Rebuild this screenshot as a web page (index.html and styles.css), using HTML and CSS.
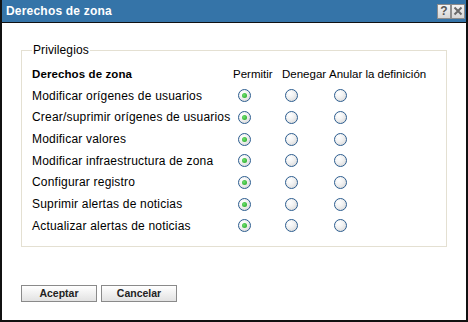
FILE: index.html
```html
<!DOCTYPE html>
<html lang="es">
<head>
<meta charset="utf-8">
<title>Derechos de zona</title>
<link rel="stylesheet" href="styles.css">
</head>
<body>
<div class="window">
  <div class="titlebar">
    <span class="title">Derechos de zona</span>
    <span class="tb-buttons">
      <span class="tb-btn help">?</span>
      <span class="tb-btn close">
        <svg width="10" height="10" viewBox="0 0 10 10"><path d="M1.5 1.5 L8.5 8.5 M8.5 1.5 L1.5 8.5" stroke="#6a6a6a" stroke-width="2" fill="none"/></svg>
      </span>
    </span>
  </div>
  <div class="content">
    <fieldset class="group">
      <legend>Privilegios</legend>
      <div class="grid">
        <div class="hdr label">Derechos de zona</div>
        <div class="hdr col">Permitir</div>
        <div class="hdr col">Denegar</div>
        <div class="hdr col">Anular la definición</div>

        <div class="label">Modificar orígenes de usuarios</div>
        <div class="cell c1"><span class="radio on"></span></div>
        <div class="cell c2"><span class="radio"></span></div>
        <div class="cell c3"><span class="radio"></span></div>

        <div class="label">Crear/suprimir orígenes de usuarios</div>
        <div class="cell c1"><span class="radio on"></span></div>
        <div class="cell c2"><span class="radio"></span></div>
        <div class="cell c3"><span class="radio"></span></div>

        <div class="label">Modificar valores</div>
        <div class="cell c1"><span class="radio on"></span></div>
        <div class="cell c2"><span class="radio"></span></div>
        <div class="cell c3"><span class="radio"></span></div>

        <div class="label">Modificar infraestructura de zona</div>
        <div class="cell c1"><span class="radio on"></span></div>
        <div class="cell c2"><span class="radio"></span></div>
        <div class="cell c3"><span class="radio"></span></div>

        <div class="label">Configurar registro</div>
        <div class="cell c1"><span class="radio on"></span></div>
        <div class="cell c2"><span class="radio"></span></div>
        <div class="cell c3"><span class="radio"></span></div>

        <div class="label">Suprimir alertas de noticias</div>
        <div class="cell c1"><span class="radio on"></span></div>
        <div class="cell c2"><span class="radio"></span></div>
        <div class="cell c3"><span class="radio"></span></div>

        <div class="label">Actualizar alertas de noticias</div>
        <div class="cell c1"><span class="radio on"></span></div>
        <div class="cell c2"><span class="radio"></span></div>
        <div class="cell c3"><span class="radio"></span></div>
      </div>
    </fieldset>
    <div class="actions">
      <button class="btn">Aceptar</button>
      <button class="btn">Cancelar</button>
    </div>
  </div>
</div>
</body>
</html>
```

FILE: styles.css
```css
html, body {
  margin: 0;
  padding: 0;
  background: #ffffff;
}

.window {
  box-sizing: border-box;
  width: 468px;
  height: 322px;
  border: 2px solid #111111;
  border-top: none;
  background: #ffffff;
  font-family: "Liberation Sans", Arial, sans-serif;
  font-size: 12px;
  color: #000000;
  display: flex;
  flex-direction: column;
}

.titlebar {
  height: 22px;
  flex: none;
  background: #3574a8;
  border-bottom: 1px solid #111111;
  display: flex;
  align-items: center;
  justify-content: space-between;
  padding: 0 1px 0 4px;
}

.title {
  color: #ffffff;
  font-weight: bold;
  font-size: 12px;
  letter-spacing: 0.2px;
}

.tb-buttons {
  display: flex;
  gap: 0;
}

.tb-btn {
  box-sizing: border-box;
  width: 14px;
  height: 15px;
  border: 1px solid #8c8c8c;
  background: linear-gradient(#f4f4f4, #d6d6d6);
  display: flex;
  align-items: center;
  justify-content: center;
  color: #555555;
  font-weight: bold;
  font-size: 12px;
  line-height: 1;
}

.content {
  padding: 20px 19px 0 19px;
}

.group {
  margin: 0;
  padding: 6px 10px 9px 10px;
  border: 1px solid #e4e0d2;
  min-width: 0;
}

.group legend {
  padding: 0 1px;
  margin-left: 0;
  line-height: 14px;
  font-size: 12px;
  letter-spacing: 0.1px;
}

.grid {
  display: grid;
  grid-template-columns: 201px 49px 47px auto;
  grid-template-rows: 22px repeat(7, 21.67px);
  align-items: center;
  letter-spacing: 0.2px;
}

.hdr {
  white-space: nowrap;
}

.hdr.col {
  font-size: 11.5px;
  letter-spacing: 0;
}

.hdr.label {
  font-weight: bold;
  font-size: 11.5px;
  letter-spacing: 0.1px;
}

.label {
  white-space: nowrap;
}

.cell {
  display: flex;
  align-items: center;
}

.c1 { padding-left: 4.5px; }
.c2 { padding-left: 2.5px; }
.c3 { padding-left: 4.5px; }

.radio {
  box-sizing: border-box;
  width: 13px;
  height: 13px;
  border-radius: 50%;
  border: 1px solid #2c5d8f;
  background: radial-gradient(circle at 35% 30%, #ffffff 0%, #f2f2f2 40%, #d2d2d2 100%);
  display: flex;
  align-items: center;
  justify-content: center;
}

.radio.on::after {
  content: "";
  width: 5px;
  height: 5px;
  border-radius: 50%;
  background: radial-gradient(circle at 40% 40%, #6ee06e, #1ea01e);
}

.actions {
  margin-top: 38px;
  display: flex;
  gap: 4px;
}

.btn {
  box-sizing: border-box;
  width: 76px;
  height: 17px;
  padding: 0;
  margin: 0;
  border: 1px solid #8a8a8a;
  border-radius: 0;
  background: linear-gradient(#ffffff, #e2e2e2);
  font-family: "Liberation Sans", Arial, sans-serif;
  font-weight: bold;
  font-size: 10.5px;
  color: #222222;
  line-height: 15px;
}
```
